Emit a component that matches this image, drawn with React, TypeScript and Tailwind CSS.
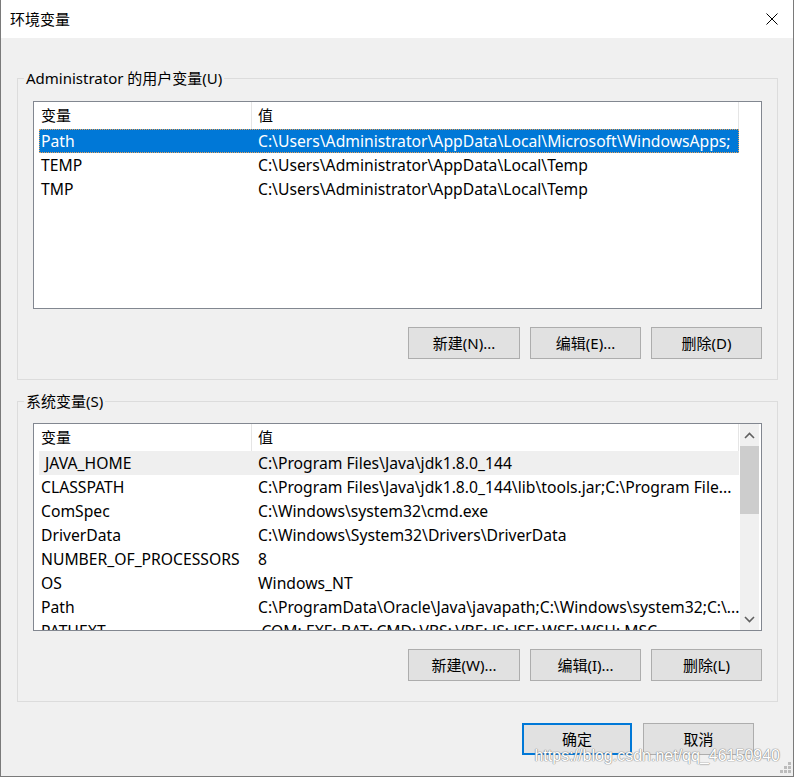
import React from 'react';

type Row = { name: string; value: string; selected?: boolean; hover?: boolean };

const userVars: Row[] = [
    { name: 'Path', value: 'C:\\Users\\Administrator\\AppData\\Local\\Microsoft\\WindowsApps;', selected: true },
    { name: 'TEMP', value: 'C:\\Users\\Administrator\\AppData\\Local\\Temp' },
    { name: 'TMP', value: 'C:\\Users\\Administrator\\AppData\\Local\\Temp' },
];

const systemVars: Row[] = [
    { name: ' JAVA_HOME', value: 'C:\\Program Files\\Java\\jdk1.8.0_144', hover: true },
    { name: 'CLASSPATH', value: 'C:\\Program Files\\Java\\jdk1.8.0_144\\lib\\tools.jar;C:\\Program File...' },
    { name: 'ComSpec', value: 'C:\\Windows\\system32\\cmd.exe' },
    { name: 'DriverData', value: 'C:\\Windows\\System32\\Drivers\\DriverData' },
    { name: 'NUMBER_OF_PROCESSORS', value: '8' },
    { name: 'OS', value: 'Windows_NT' },
    { name: 'Path', value: 'C:\\ProgramData\\Oracle\\Java\\javapath;C:\\Windows\\system32;C:\\...' },
    { name: 'PATHEXT', value: '.COM;.EXE;.BAT;.CMD;.VBS;.VBE;.JS;.JSE;.WSF;.WSH;.MSC' },
];

const WinButton: React.FC<{ label: string; primary?: boolean; width?: string }> = ({ label, primary, width }) => (
    <button
        className={`${width ?? 'w-[111px]'} h-[32px] bg-[#e1e1e1] text-black text-[15px] flex items-center justify-center ${
            primary ? 'border-2 border-[#0078d7]' : 'border border-[#adadad]'
        }`}
    >
        {label}
    </button>
);

const Chevron: React.FC<{ up?: boolean }> = ({ up }) => (
    <svg width="11" height="7" viewBox="0 0 11 7">
        <path
            d={up ? 'M1 6 L5.5 1.5 L10 6' : 'M1 1 L5.5 5.5 L10 1'}
            fill="none"
            stroke="#606060"
            strokeWidth="1.6"
        />
    </svg>
);

const VarList: React.FC<{ rows: Row[]; scroll?: boolean }> = ({ rows, scroll }) => (
    <div className="h-[208px] border border-[#828790] bg-white flex overflow-hidden">
        <div className="w-[706px] pl-[5px] overflow-hidden shrink-0">
            <div className="h-[27px] flex">
                <div className="w-[213px] pl-[2px] flex items-center border-r border-[#e5e5e5]">变量</div>
                <div className="w-[487px] pl-[6px] flex items-center border-r border-[#e5e5e5]">值</div>
            </div>
            {rows.map(r => (
                <div
                    key={r.name}
                    className={`h-[24px] w-[700px] flex items-center pt-[1px] text-[15.7px] ${
                        r.selected
                            ? 'bg-[#0078d7] text-white outline outline-1 outline-dotted outline-[#e8a25a] -outline-offset-1'
                            : r.hover
                            ? 'bg-[#efefef]'
                            : ''
                    }`}
                >
                    <div className="w-[213px] pl-[2px] whitespace-pre overflow-hidden">{r.name}</div>
                    <div className="w-[487px] pl-[6px] whitespace-nowrap overflow-hidden">{r.value}</div>
                </div>
            ))}
        </div>
        {scroll && (
            <div className="w-[19px] bg-[#f0f0f0] flex flex-col shrink-0">
                <div className="h-[22px] flex items-center justify-center">
                    <Chevron up />
                </div>
                <div className="h-[68px] bg-[#cdcdcd]" />
                <div className="flex-1" />
                <div className="h-[22px] flex items-center justify-center">
                    <Chevron />
                </div>
            </div>
        )}
    </div>
);

const GroupBox: React.FC<{ title: string; listTop: string; children: React.ReactNode }> = ({ title, listTop, children }) => (
    <div className="border border-[#dcdcdc] px-[15px] pb-[20px]">
        <div className="-mt-[10px] -ml-[9px] h-[18px] w-fit px-[2px] bg-[#f0f0f0] flex items-center leading-none">{title}</div>
        <div className={listTop}>{children}</div>
    </div>
);

const ButtonRow: React.FC<{ labels: string[] }> = ({ labels }) => (
    <div className="mt-[18px] flex justify-end gap-[10px]">
        {labels.map(l => (
            <WinButton key={l} label={l} width={l.startsWith('新建') ? 'w-[112px]' : 'w-[111px]'} />
        ))}
    </div>
);

const App: React.FC = () => {
    return (
        <div className="relative w-[794px] h-[777px] bg-[#f0f0f0] border-x border-b border-[#7a7a7a] text-[15px] text-black font-['Noto_Sans','Noto_Sans_CJK_SC',sans-serif] overflow-hidden">
            {/* title bar */}
            <div className="h-[38px] bg-white flex items-center justify-between pl-[9px] pr-[15px]">
                <span className="pt-[1px]">环境变量</span>
                <svg width="12" height="12" viewBox="0 0 12 12">
                    <path d="M0.5 0.5 L11.5 11.5 M11.5 0.5 L0.5 11.5" stroke="#000" strokeWidth="1" fill="none" />
                </svg>
            </div>

            <div className="mt-[40px] ml-[16px] mr-[15px] flex flex-col gap-[21px]">
                <GroupBox title="Administrator 的用户变量(U)" listTop="mt-[14px]">
                    <VarList rows={userVars} />
                    <ButtonRow labels={['新建(N)...', '编辑(E)...', '删除(D)']} />
                </GroupBox>
                <GroupBox title="系统变量(S)" listTop="mt-[13px]">
                    <VarList rows={systemVars} scroll />
                    <ButtonRow labels={['新建(W)...', '编辑(I)...', '删除(L)']} />
                </GroupBox>
            </div>

            <div className="mt-[21px] pr-[39px] flex justify-end gap-[11px]">
                <WinButton label="确定" primary width="w-[110px]" />
                <WinButton label="取消" />
            </div>

            {/* watermark */}
            <div className="absolute right-[13px] bottom-[8px] text-[16px] font-['Liberation_Sans',sans-serif] text-white [text-shadow:0_0_1px_#8a8a8a,0_0_1px_#8a8a8a,0_0_1px_#8a8a8a]">
                https://blog.csdn.net/qq_46150940
            </div>

            {/* resize grip */}
            <svg className="absolute right-[2px] bottom-[3px]" width="11" height="11" viewBox="0 0 11 11">
                <g fill="#bcbcbc">
                    <rect x="8" y="0" width="3" height="3" />
                    <rect x="4" y="4" width="3" height="3" />
                    <rect x="8" y="4" width="3" height="3" />
                    <rect x="0" y="8" width="3" height="3" />
                    <rect x="4" y="8" width="3" height="3" />
                    <rect x="8" y="8" width="3" height="3" />
                </g>
            </svg>
        </div>
    );
};

export default App;
